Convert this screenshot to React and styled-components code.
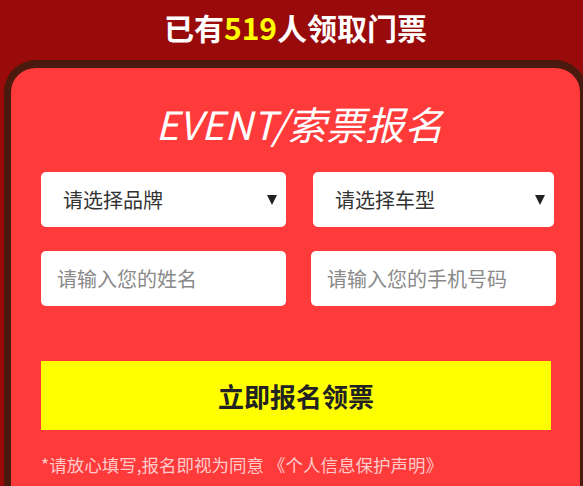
import React from 'react';
import styled, { createGlobalStyle } from 'styled-components';

const GlobalStyle = createGlobalStyle`
	html, body {
		margin: 0;
		padding: 0;
		background: #990a0a;
		overflow: hidden;
	}
	* {
		box-sizing: border-box;
	}
`;

const Page = styled.div`
	width: 583px;
	height: 486px;
	font-family: 'Noto Sans CJK SC', 'Noto Sans', sans-serif;
	background: #990a0a;
	overflow: hidden;
`;

const Counter = styled.div`
	height: 60px;
	display: flex;
	align-items: center;
	justify-content: center;
	padding: 0 0 6px 8px;
	color: #fff;
	font-size: 30px;
	font-weight: 700;
`;

const Count = styled.span`
	color: #ffff00;
`;

const Card = styled.div`
	margin-left: 4px;
	width: 583px;
	height: 480px;
	border: 7px solid #4b1a0f;
	border-top-width: 8px;
	border-radius: 32px;
	background: #ff3a3a;
	padding: 32px 0 0 30px;
`;

const FormTitle = styled.h2`
	margin: 0 0 26px;
	padding-right: 22px;
	text-align: center;
	color: #fff;
	font-size: 39px;
	font-weight: 400;
	font-style: italic;
	line-height: 46px;
`;

const Grid = styled.div`
	display: grid;
	grid-template-columns: 245px 245px;
	column-gap: 25px;
	row-gap: 24px;
`;

const SelectWrap = styled.div`
	position: relative;
	height: 55px;
	margin-right: ${(p) => (p.$narrow ? '2px' : '0')};
	margin-left: ${(p) => (p.$narrow ? '2px' : '0')};
`;

const Select = styled.select`
	appearance: none;
	width: 100%;
	height: 100%;
	border: none;
	border-radius: 5px;
	background: #fff;
	padding: 0 30px 0 22px;
	font-family: inherit;
	font-size: 20px;
	color: #333;
	outline: none;
`;

const Arrow = styled.span`
	position: absolute;
	right: 9px;
	top: 50%;
	transform: translateY(-50%);
	width: 0;
	height: 0;
	border-left: 5px solid transparent;
	border-right: 5px solid transparent;
	border-top: 10px solid #222;
	pointer-events: none;
`;

const Input = styled.input`
	width: 100%;
	height: 55px;
	border: none;
	border-radius: 5px;
	background: #fff;
	padding: 0 16px;
	font-family: inherit;
	font-size: 20px;
	color: #333;
	outline: none;

	&::placeholder {
		color: #8a8a8a;
	}
`;

const Submit = styled.button`
	display: block;
	width: 510px;
	height: 69px;
	margin-top: 55px;
	border: none;
	background: #ffff00;
	color: #222;
	font-family: inherit;
	font-size: 26px;
	font-weight: 700;
	cursor: pointer;
`;

const Notice = styled.p`
	margin: 23px 0 0;
	color: #ffcaca;
	font-size: 17.5px;
	line-height: 24px;
	white-space: nowrap;
`;

function App() {
	return (
		<Page>
			<GlobalStyle />
			<Counter>
				已有<Count>519</Count>人领取门票
			</Counter>
			<Card>
				<FormTitle>EVENT/索票报名</FormTitle>
				<Grid>
					<SelectWrap>
						<Select defaultValue="">
							<option value="">请选择品牌</option>
						</Select>
						<Arrow />
					</SelectWrap>
					<SelectWrap $narrow>
						<Select defaultValue="">
							<option value="">请选择车型</option>
						</Select>
						<Arrow />
					</SelectWrap>
					<Input placeholder="请输入您的姓名" />
					<Input placeholder="请输入您的手机号码" />
				</Grid>
				<Submit>立即报名领票</Submit>
				<Notice>*请放心填写,报名即视为同意 《个人信息保护声明》</Notice>
			</Card>
		</Page>
	);
}

export default App;
